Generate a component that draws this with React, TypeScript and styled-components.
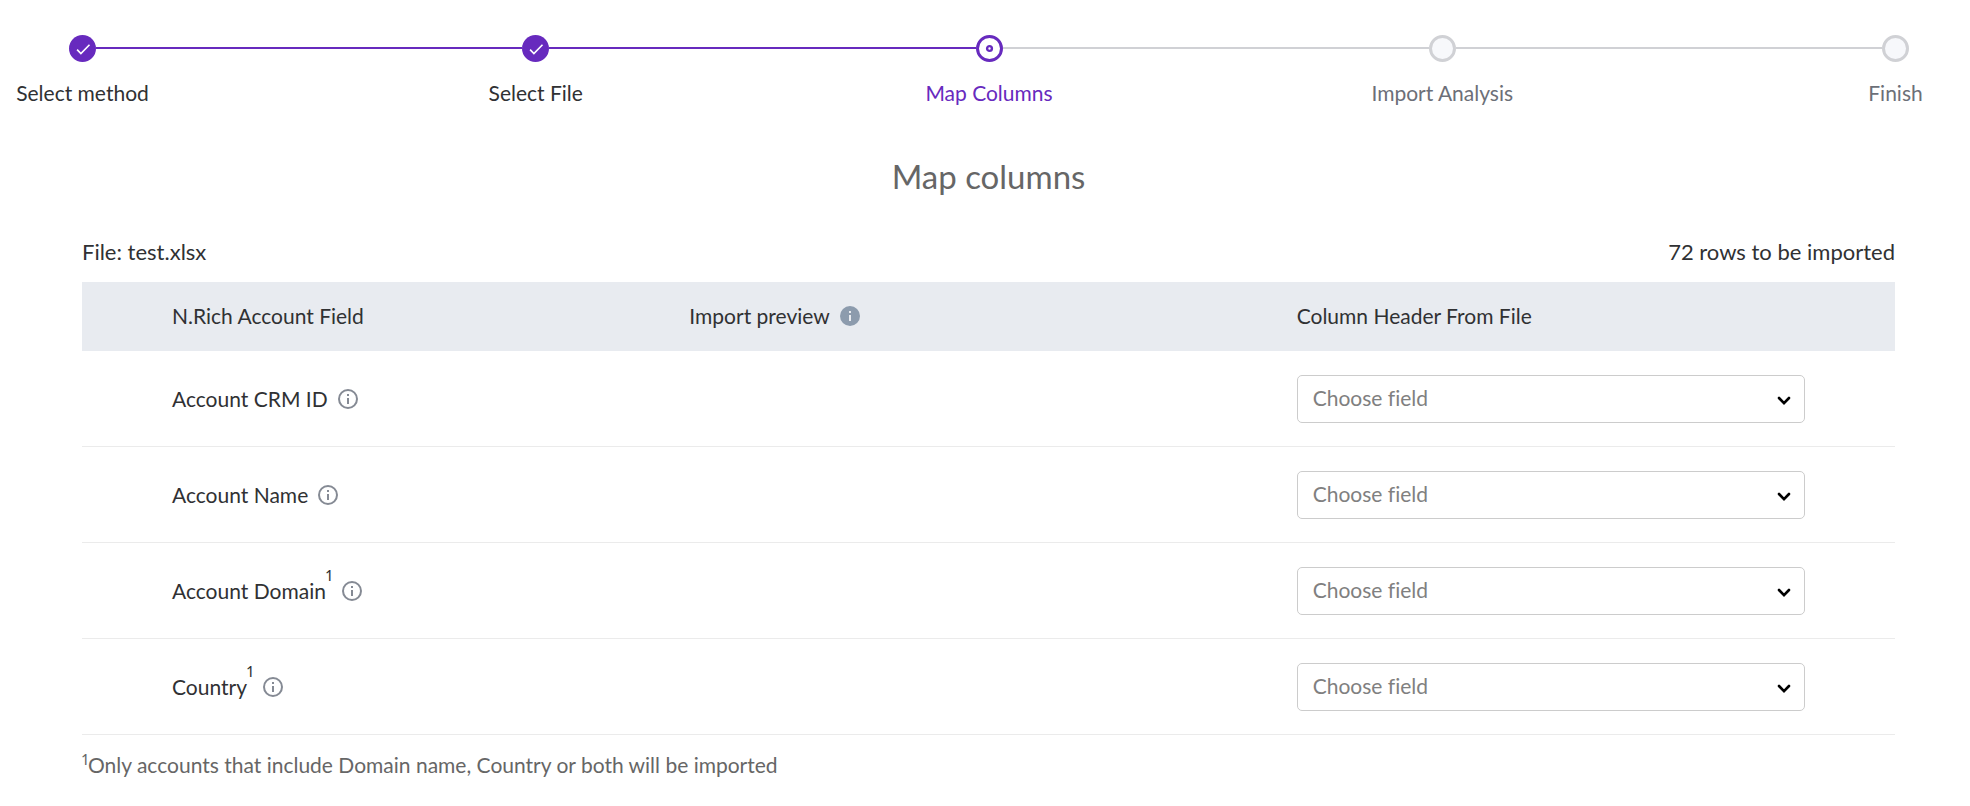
import React from "react";
import styled, { createGlobalStyle } from "styled-components";

type StepState = "done" | "current" | "upcoming";

const GlobalStyle = createGlobalStyle`
  *, *::before, *::after {
    box-sizing: border-box;
  }
  body {
    margin: 0;
    background: #fff;
    color: #303133;
    font-family: Lato, "Liberation Sans", sans-serif;
    font-size: 21px;
    line-height: 28px;
    font-variant-ligatures: none;
  }
`;

const Page = styled.main`
  padding: 35px 75px 24px 82px;
`;

const Steps = styled.ol`
  display: flex;
  justify-content: space-between;
  margin: 0 -14px 0 -13px;
  padding: 0;
  list-style: none;
`;

const StepItem = styled.li<{ $state: StepState }>`
  display: flex;
  flex: none;
  flex-direction: column;
  align-items: center;
  gap: 17px;
  width: 27px;
  white-space: nowrap;
  color: ${({ $state }) =>
    $state === "done" ? "#303133" : $state === "current" ? "#672abe" : "#6c6f78"};
`;

const StepIcon = styled.svg`
  flex: none;
  width: 27px;
  height: 27px;
`;

const StepLine = styled.li<{ $reached: boolean }>`
  flex: 1;
  height: 2px;
  margin-top: 12px;
  background: ${({ $reached }) => ($reached ? "#672abe" : "#d0d1d5")};
`;

const Title = styled.h1`
  margin: 49px 0 42px;
  font-size: 33px;
  line-height: 40px;
  font-weight: 400;
  text-align: center;
  color: #666;
`;

const FileSummary = styled.div`
  display: flex;
  justify-content: space-between;
  margin-bottom: 16px;
  font-size: 22px;
`;

const MappingTable = styled.table`
  width: 100%;
  table-layout: fixed;
  border-collapse: separate;
  border-spacing: 0;
`;

const HeaderCell = styled.th<{ $width: string }>`
  width: ${({ $width }) => $width};
  height: 69px;
  padding: 0 0 1px;
  background: #e8ebf0;
  font-weight: 400;
  text-align: left;

  &:first-child {
    padding-left: 90px;
  }
`;

const Cell = styled.td`
  padding: 24px 0 23px;
  border-bottom: 1px solid #ebebeb;

  &:first-child {
    padding-left: 90px;
  }
  &:last-child {
    padding-right: 90px;
  }
`;

const Labelled = styled.div`
  display: flex;
  align-items: center;
  gap: 10px;
`;

const Mark = styled.sup<{ $raise: number }>`
  position: relative;
  top: ${({ $raise }) => -$raise}px;
  vertical-align: baseline;
  font-size: 15px;
  line-height: 0;
  font-variant-numeric: proportional-nums;
`;

const InfoButton = styled.button`
  display: block;
  width: 20px;
  height: 20px;
  padding: 0;
  border: 0;
  background: none;
  cursor: pointer;

  svg {
    display: block;
  }
`;

const SelectBox = styled.div`
  position: relative;
`;

const FieldSelect = styled.select`
  display: block;
  width: 100%;
  height: 48px;
  padding: 0 48px 2px 15px;
  border: 1px solid #ccc;
  border-radius: 5px;
  appearance: none;
  background: #fff;
  color: #808080;
  font: inherit;
  font-variant-ligatures: none;
`;

const Chevron = styled.svg`
  position: absolute;
  top: 21px;
  right: 14px;
  width: 14px;
  height: 10px;
  pointer-events: none;
`;

const Footnote = styled.p`
  margin: 16px 0 0;
  color: #666;
`;

const steps: { label: string; state: StepState }[] = [
  { label: "Select method", state: "done" },
  { label: "Select File", state: "done" },
  { label: "Map Columns", state: "current" },
  { label: "Import Analysis", state: "upcoming" },
  { label: "Finish", state: "upcoming" },
];

const fields = [
  { id: "crm-id", label: "Account CRM ID", marked: false },
  { id: "name", label: "Account Name", marked: false },
  { id: "domain", label: "Account Domain", marked: true },
  { id: "country", label: "Country", marked: true },
];

function StepMarker({ state }: { state: StepState }) {
  return (
    <StepIcon viewBox="0 0 27 27" aria-hidden="true">
      {state === "done" && (
        <>
          <circle cx="13.5" cy="13.5" r="13.5" fill="#672abe" />
          <path d="M8.1 14.6l3.8 4 8.6-8.9" fill="none" stroke="#fff" strokeWidth="1.6" />
        </>
      )}
      {state === "current" && (
        <>
          <circle cx="13.5" cy="13.5" r="12" fill="#fff" stroke="#672abe" strokeWidth="3" />
          <circle cx="13.5" cy="13.5" r="2.4" fill="#fff" stroke="#672abe" strokeWidth="2.4" />
        </>
      )}
      {state === "upcoming" && (
        <circle cx="13.5" cy="13.5" r="12" fill="#f7f8fb" stroke="#d0d1d5" strokeWidth="3" />
      )}
    </StepIcon>
  );
}

function Info({ label, filled = false }: { label: string; filled?: boolean }) {
  const ink = filled ? "#e8ebf0" : "#858a94";
  return (
    <InfoButton type="button" aria-label={label}>
      <svg width="20" height="20" viewBox="0 0 20 20">
        {filled ? (
          <circle cx="10" cy="10" r="10" fill="#8c9bad" />
        ) : (
          <circle cx="10" cy="10" r="9" fill="none" stroke={ink} strokeWidth="2" />
        )}
        <rect x="9" y="5" width="2" height="2" fill={ink} />
        <rect x="9" y="9" width="2" height="6" fill={ink} />
      </svg>
    </InfoButton>
  );
}

export default function App() {
  return (
    <>
      <GlobalStyle />
      <Page>
        <Steps>
          {steps.map(({ label, state }, i) => (
            <React.Fragment key={label}>
              {i > 0 && <StepLine $reached={state !== "upcoming"} aria-hidden="true" />}
              <StepItem $state={state} aria-current={state === "current" ? "step" : undefined}>
                <StepMarker state={state} />
                <span>{label}</span>
              </StepItem>
            </React.Fragment>
          ))}
        </Steps>

        <Title>Map columns</Title>

        <FileSummary>
          <span>File: test.xlsx</span>
          <span>72 rows to be imported</span>
        </FileSummary>

        <MappingTable>
          <thead>
            <tr>
              <HeaderCell $width="33.5%">N.Rich Account Field</HeaderCell>
              <HeaderCell $width="33.5%">
                <Labelled>
                  Import preview
                  <Info label="About import preview" filled />
                </Labelled>
              </HeaderCell>
              <HeaderCell $width="33%">Column Header From File</HeaderCell>
            </tr>
          </thead>
          <tbody>
            {fields.map(({ id, label, marked }) => (
              <tr key={id}>
                <Cell>
                  <Labelled>
                    <label htmlFor={id}>
                      {label}
                      {marked && <Mark $raise={18}>1</Mark>}
                    </label>
                    <Info label={`About ${label}`} />
                  </Labelled>
                </Cell>
                <Cell />
                <Cell>
                  <SelectBox>
                    <FieldSelect id={id} defaultValue="">
                      <option value="">Choose field</option>
                    </FieldSelect>
                    <Chevron viewBox="0 0 14 10" aria-hidden="true">
                      <path
                        d="M2 2l5 5.2L12 2"
                        fill="none"
                        stroke="#000"
                        strokeWidth="2.6"
                        strokeLinecap="round"
                      />
                    </Chevron>
                  </SelectBox>
                </Cell>
              </tr>
            ))}
          </tbody>
        </MappingTable>

        <Footnote>
          <Mark $raise={8}>1</Mark>Only accounts that include Domain name, Country or both will be
          imported
        </Footnote>
      </Page>
    </>
  );
}
